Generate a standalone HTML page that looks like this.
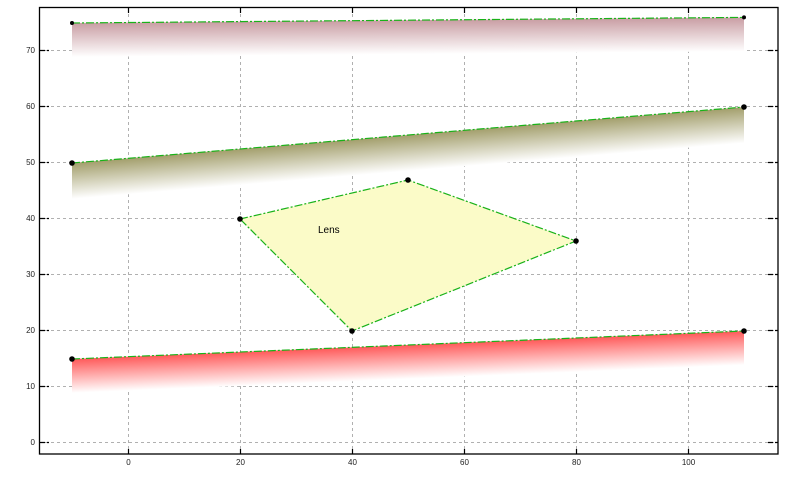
<!DOCTYPE html>
<html><head><meta charset="utf-8"><style>html,body{margin:0;padding:0;background:#fff;}svg{display:block;font-family:"Liberation Sans",sans-serif;}</style></head>
<body>
<svg width="790" height="478" viewBox="0 0 790 478" xmlns="http://www.w3.org/2000/svg">
<defs>
<linearGradient id="g1" gradientUnits="userSpaceOnUse" x1="0" y1="0" x2="0" y2="34" gradientTransform="matrix(1,-0.0083,0,1,0,23.6)">
<stop offset="0" stop-color="#c99ea4"/><stop offset="1" stop-color="#fff"/></linearGradient>
<linearGradient id="g2" gradientUnits="userSpaceOnUse" x1="0" y1="0" x2="0" y2="36" gradientTransform="matrix(1,-0.0833,0,1,0,169)">
<stop offset="0" stop-color="#a39f6c"/><stop offset="1" stop-color="#fff"/></linearGradient>
<linearGradient id="g3" gradientUnits="userSpaceOnUse" x1="0" y1="0" x2="0" y2="34" gradientTransform="matrix(1,-0.0417,0,1,0,362)">
<stop offset="0" stop-color="#ff5a5a"/><stop offset="1" stop-color="#fff"/></linearGradient>
</defs>
<g stroke="#b0b0b0" stroke-dasharray="3,3" stroke-width="1">
<line x1="128.5" y1="8" x2="128.5" y2="454"/><line x1="240.5" y1="8" x2="240.5" y2="454"/><line x1="352.5" y1="8" x2="352.5" y2="454"/><line x1="464.5" y1="8" x2="464.5" y2="454"/><line x1="576.5" y1="8" x2="576.5" y2="454"/><line x1="688.5" y1="8" x2="688.5" y2="454"/>
<line x1="39" y1="442.5" x2="778" y2="442.5"/><line x1="39" y1="386.5" x2="778" y2="386.5"/><line x1="39" y1="330.5" x2="778" y2="330.5"/><line x1="39" y1="274.5" x2="778" y2="274.5"/><line x1="39" y1="218.5" x2="778" y2="218.5"/><line x1="39" y1="162.5" x2="778" y2="162.5"/><line x1="39" y1="106.5" x2="778" y2="106.5"/><line x1="39" y1="50.5" x2="778" y2="50.5"/>
</g>
<polygon points="72,23 744,17.4 744,51.4 72,57" fill="url(#g1)"/>
<polygon points="72,163 744,107 744,143 72,199" fill="url(#g2)"/>
<polygon points="72,359 744,331 744,365 72,393" fill="url(#g3)"/>
<polygon points="240,219 408,180 576,241 352,331" fill="#fbfbc8"/>
<g stroke="#19b219" stroke-width="1.2" fill="none" stroke-dasharray="8,2,2,2">
<line x1="72" y1="23" x2="744" y2="17.4"/>
<line x1="72" y1="163" x2="744" y2="107"/>
<line x1="72" y1="359" x2="744" y2="331"/>
<polygon points="240,219 408,180 576,241 352,331"/>
</g>
<g fill="#000">
<circle cx="72" cy="23" r="2"/><circle cx="744" cy="17.4" r="2"/>
<circle cx="72" cy="163" r="2.8"/><circle cx="744" cy="107" r="2.8"/>
<circle cx="72" cy="359" r="2.8"/><circle cx="744" cy="331" r="2.8"/>
<circle cx="240" cy="219" r="2.8"/><circle cx="408" cy="180" r="2.8"/><circle cx="576" cy="241" r="2.8"/><circle cx="352" cy="331" r="2.8"/>
</g>
<text x="318" y="233" font-size="10" fill="#000">Lens</text>
<rect x="39.5" y="7.5" width="738.5" height="446.5" fill="none" stroke="#000" stroke-width="1.3"/>
<g stroke="#000" stroke-width="1.2" stroke-dasharray="5,2">
<path d="M40 442.5h9M40 386.5h9M40 330.5h9M40 274.5h9M40 218.5h9M40 162.5h9M40 106.5h9M40 50.5h9"/>
<path d="M768 442.5h10M768 386.5h10M768 330.5h10M768 274.5h10M768 218.5h10M768 162.5h10M768 106.5h10M768 50.5h10"/>
<path d="M128.5 454v-7M240.5 454v-7M352.5 454v-7M464.5 454v-7M576.5 454v-7M688.5 454v-7"/>
<path d="M128.5 8v6M240.5 8v6M352.5 8v6M464.5 8v6M576.5 8v6M688.5 8v6"/>
</g>
<g font-size="8" fill="#222" text-anchor="end">
<text x="35" y="445">0</text><text x="35" y="389">10</text><text x="35" y="333">20</text><text x="35" y="277">30</text><text x="35" y="221">40</text><text x="35" y="165">50</text><text x="35" y="109">60</text><text x="35" y="53">70</text>
</g>
<g font-size="8" fill="#222" text-anchor="middle">
<text x="128.5" y="465">0</text><text x="240.5" y="465">20</text><text x="352.5" y="465">40</text><text x="464.5" y="465">60</text><text x="576.5" y="465">80</text><text x="688.5" y="465">100</text>
</g>
</svg>
</body></html>
